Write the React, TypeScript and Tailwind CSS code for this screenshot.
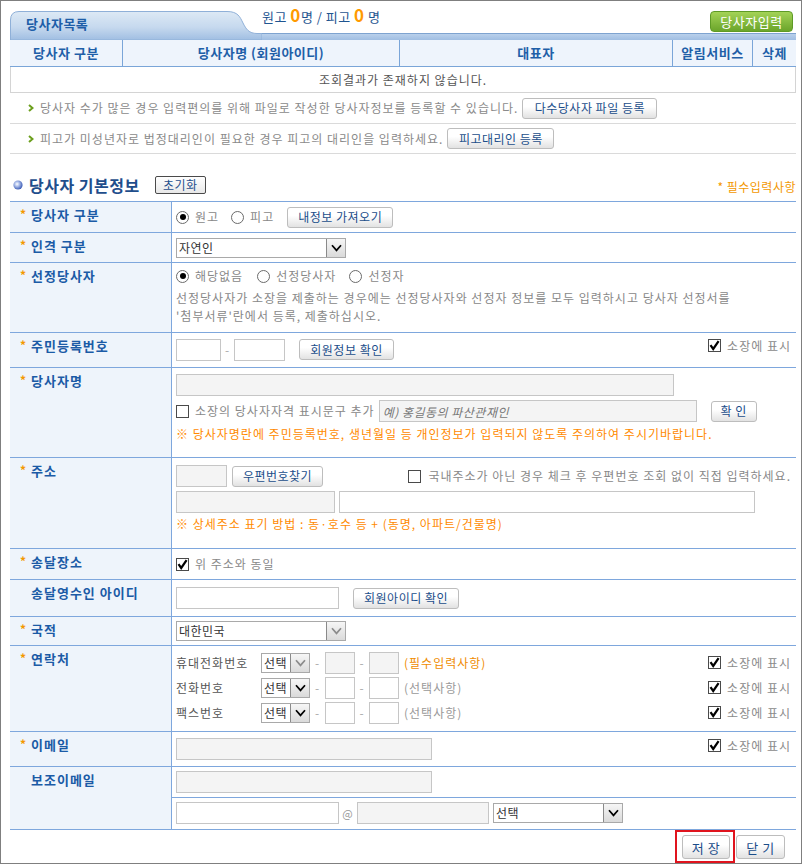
import React from "react";

function Check({ checked = false }: { checked?: boolean }) {
  return (
    <span className="inline-flex w-[13px] h-[13px] shrink-0 items-center justify-center border border-[#4a4a4a] bg-white">
      {checked && (
        <svg width="11" height="11" viewBox="0 0 11 11">
          <path d="M1.5 5.2 L4.2 9 L9.6 1.2" fill="none" stroke="#000" strokeWidth="2.2" />
        </svg>
      )}
    </span>
  );
}

function Radio({ checked = false }: { checked?: boolean }) {
  return (
    <span className="inline-flex w-[13px] h-[13px] shrink-0 items-center justify-center rounded-full border border-[#6b6b6b] bg-white">
      {checked && <span className="w-[6px] h-[6px] rounded-full bg-black" />}
    </span>
  );
}

function Btn({ children, className = "" }: { children: React.ReactNode; className?: string }) {
  return (
    <button
      type="button"
      className={`inline-flex shrink-0 items-center justify-center rounded-[3px] border border-[#bdbdbd] bg-linear-to-b from-white from-40% to-[#e2e2e2] text-[12px] leading-none tracking-[0.5px] whitespace-nowrap text-[#1b4e8a] ${className}`}
    >
      {children}
    </button>
  );
}

function Select({ value, className = "", disabled = false }: { value: string; className?: string; disabled?: boolean }) {
  return (
    <div className={`flex h-[20px] shrink-0 border border-[#a9a9a9] bg-white ${className}`}>
      <span className="flex-1 pl-[2px] text-[12px] leading-[18px] tracking-[0.5px] text-[#333] whitespace-nowrap overflow-hidden">{value}</span>
      <span className="flex w-[19px] items-center justify-center border-l border-[#8a8a8a] bg-linear-to-b from-[#f6f6f6] to-[#dadada]">
        <svg width="11" height="8" viewBox="0 0 11 8">
          <path d="M1 1.2 L5.5 6.4 L10 1.2" fill="none" stroke={disabled ? "#8c8c8c" : "#000"} strokeWidth="1.7" />
        </svg>
      </span>
    </div>
  );
}

function Field({ className = "", gray = false, placeholder }: { className?: string; gray?: boolean; placeholder?: string }) {
  return (
    <input
      readOnly
      placeholder={placeholder}
      className={`h-[22px] shrink-0 border border-[#c6c6c6] px-[3px] text-[12px] tracking-[0.5px] outline-none italic placeholder:text-[#777] ${gray ? "bg-[#f4f4f4]" : "bg-white"} ${className}`}
    />
  );
}

function ShowOnDoc() {
  return (
    <div className="ml-auto flex h-[13px] items-center gap-[6px]">
      <Check checked />
      <span className="text-[12px] leading-none text-[#8a8a8a] whitespace-nowrap">소장에 표시</span>
    </div>
  );
}

function Row({
  label,
  req = false,
  h,
  cell = "",
  children,
}: {
  label: string;
  req?: boolean;
  h: string;
  cell?: string;
  children: React.ReactNode;
}) {
  return (
    <div className={`flex border-b border-[#7ea7dd] ${h}`}>
      <div className="flex w-[162px] shrink-0 items-start border-r border-[#7ea7dd] bg-[#eef4fb] pl-[10px] pt-[4px]">
        <span className="w-[11px] text-[12px] font-bold leading-[16px] text-[#f39800]">{req ? "*" : ""}</span>
        <span className="text-[13px] font-bold leading-[18px] tracking-[1px] text-[#1b5ba6] whitespace-nowrap">{label}</span>
      </div>
      <div className={`flex-1 pl-[4px] pr-[5px] ${cell}`}>{children}</div>
    </div>
  );
}

function PhoneLine({ label, note, required = false }: { label: string; note: string; required?: boolean }) {
  return (
    <div className="flex h-[25px] items-center">
      <span className="w-[85px] text-[12px] text-[#555]">{label}</span>
      <Select className="w-[49px]" value="선택" disabled={required} />
      <span className="w-[15px] text-center text-[12px] text-[#aaa]">-</span>
      <Field className="w-[30px]" gray={required} />
      <span className="w-[14px] text-center text-[12px] text-[#aaa]">-</span>
      <Field className="w-[30px]" gray={required} />
      <span className={`ml-[5px] text-[12px] ${required ? "text-[#f08c00]" : "text-[#999]"}`}>{note}</span>
      <ShowOnDoc />
    </div>
  );
}

function Arrow() {
  return (
    <svg width="6" height="8" viewBox="0 0 6 8" className="mr-[6px] shrink-0">
      <path d="M1 1 L4.5 4 L1 7" fill="none" stroke="#6c9f1d" strokeWidth="2" />
    </svg>
  );
}

export default function App() {
  return (
    <div className="w-[802px] h-[864px] overflow-hidden border border-[#7f7f7f] bg-white pl-[9px] pr-[5px] pt-[10px] font-['Noto_Sans_CJK_KR','Noto_Sans',sans-serif] text-[12px] tracking-[1px] text-[#666]">
      {/* list tab + counters */}
      <div className="flex h-[29px] items-stretch">
        <div className="relative h-[29px] w-[252px] shrink-0">
          <svg className="absolute inset-0" width="252" height="29" viewBox="0 0 252 29">
            <defs>
              <linearGradient id="tabFill" x1="0" y1="0" x2="0" y2="1">
                <stop offset="0" stopColor="#dde9f5" />
                <stop offset="0.55" stopColor="#c6d9ee" />
                <stop offset="1" stopColor="#a0bee2" />
              </linearGradient>
            </defs>
            <path
              d="M0.5 29 L0.5 9 Q0.5 0.5 9 0.5 L217 0.5 C228 0.5 230 6 233 12 C236 18 239 22.5 247 22.5 L252 22.5 L252 29 Z"
              fill="url(#tabFill)"
              stroke="#8fb0d8"
              strokeWidth="1"
            />
          </svg>
          <span className="relative block pl-[16px] pt-[4px] text-[13px] font-bold leading-[18px] tracking-[0.5px] text-[#1e5ea8]">당사자목록</span>
        </div>
        <div className="flex flex-1 flex-col">
          <div className="flex h-[22px] items-start justify-between">
            <div className="-mt-[2px] flex items-baseline text-[13px] leading-[12px] tracking-[0.5px] text-[#1f5590]">
              <span>원고&nbsp;</span>
              <span className="text-[17px] font-bold text-[#ff9a00]">0</span>
              <span>명 / 피고&nbsp;</span>
              <span className="text-[17px] font-bold text-[#ff9a00]">0</span>
              <span>&nbsp;명</span>
            </div>
            <button
              type="button"
              className="mr-[3px] h-[21px] w-[83px] rounded-[4px] border border-[#5e9a26] bg-linear-to-b from-[#a3d356] to-[#6ba52a] text-[13px] leading-none tracking-[0.5px] text-white"
            >
              당사자입력
            </button>
          </div>
          <div className="h-[7px] border-t border-[#7ea3d0] bg-linear-to-b from-[#b9d0eb] to-[#a0bee2]" />
        </div>
      </div>

      {/* list header */}
      <div className="grid h-[27px] grid-cols-[113px_277px_273px_80px_1fr] border-b border-[#7aa5d8] bg-[#eef4fc] text-[13px] font-bold tracking-[0.5px] text-[#1f5fa8]">
        <div className="flex items-center justify-center border-r border-[#7aa5d8]">당사자 구분</div>
        <div className="flex items-center justify-center border-r border-[#7aa5d8]">당사자명 (회원아이디)</div>
        <div className="flex items-center justify-center border-r border-[#7aa5d8]">대표자</div>
        <div className="flex items-center justify-center border-r border-[#7aa5d8]">알림서비스</div>
        <div className="flex items-center justify-center">삭제</div>
      </div>
      <div className="flex h-[26px] items-center justify-center border-x border-b border-[#d4d4d4] text-[12px] text-[#555]">
        조회결과가 존재하지 않습니다.
      </div>

      {/* notices */}
      <div className="flex h-[31px] items-center border-b border-[#dadada] pl-[18px] text-[#8a8a8a]">
        <Arrow />
        <span>당사자 수가 많은 경우 입력편의를 위해 파일로 작성한 당사자정보를 등록할 수 있습니다.</span>
        <Btn className="ml-[4px] h-[21px] w-[135px]">다수당사자 파일 등록</Btn>
      </div>
      <div className="flex h-[30px] items-center border-b border-[#dadada] pl-[18px] text-[#8a8a8a]">
        <Arrow />
        <span>피고가 미성년자로 법정대리인이 필요한 경우 피고의 대리인을 입력하세요.</span>
        <Btn className="ml-[4px] h-[21px] w-[107px]">피고대리인 등록</Btn>
      </div>

      {/* section title */}
      <div className="mt-[21px] flex h-[20px] items-center pl-[3px]">
        <svg width="10" height="10" viewBox="0 0 10 10" className="shrink-0">
          <defs>
            <radialGradient id="dot" cx="0.4" cy="0.4" r="0.6">
              <stop offset="0" stopColor="#ffffff" />
              <stop offset="0.35" stopColor="#b9c9ef" />
              <stop offset="1" stopColor="#3f5fb8" />
            </radialGradient>
          </defs>
          <circle cx="5" cy="5" r="4.6" fill="url(#dot)" />
        </svg>
        <span className="ml-[6px] text-[16px] font-bold leading-[20px] tracking-[0.5px] text-[#1f4e8c]">당사자 기본정보</span>
        <button
          type="button"
          className="ml-[15px] h-[18px] w-[51px] rounded-[2px] border border-[#4a4a4a] bg-linear-to-b from-white to-[#e8e8e8] text-[12px] leading-none tracking-[0.5px] text-[#1f4e8c]"
        >
          초기화
        </button>
        <span className="ml-auto pt-[4px] text-[12px] tracking-[0.5px] text-[#f39800]">* 필수입력사항</span>
      </div>

      {/* form */}
      <div className="mt-[6px] border-t border-[#7ea7dd]">
        <Row label="당사자 구분" req h="h-[31px]" cell="flex items-center text-[#888]">
          <Radio checked />
          <span className="ml-[6px]">원고</span>
          <span className="ml-[12px]" />
          <Radio />
          <span className="ml-[6px]">피고</span>
          <Btn className="ml-[13px] h-[21px] w-[106px]">내정보 가져오기</Btn>
        </Row>

        <Row label="인격 구분" req h="h-[30px]" cell="flex items-center">
          <Select className="w-[170px]" value="자연인" />
        </Row>

        <Row label="선정당사자" req h="h-[70px]" cell="pt-[4px] text-[#888]">
          <div className="flex h-[18px] items-center">
            <Radio checked />
            <span className="ml-[6px]">해당없음</span>
            <span className="ml-[14px]" />
            <Radio />
            <span className="ml-[6px]">선정당사자</span>
            <span className="ml-[13px]" />
            <Radio />
            <span className="ml-[6px]">선정자</span>
          </div>
          <div className="mt-[4px] leading-[18px]">
            선정당사자가 소장을 제출하는 경우에는 선정당사자와 선정자 정보를 모두 입력하시고 당사자 선정서를
            <br />
            '첨부서류'란에서 등록, 제출하십시오.
          </div>
        </Row>

        <Row label="주민등록번호" req h="h-[35px]" cell="flex items-start pt-[6px]">
          <Field className="w-[45px]" />
          <span className="w-[13px] text-center leading-[22px] text-[#aaa]">-</span>
          <Field className="w-[51px]" />
          <Btn className="ml-[14px] h-[21px] w-[95px]">회원정보 확인</Btn>
          <ShowOnDoc />
        </Row>

        <Row label="당사자명" req h="h-[90px]" cell="pt-[6px]">
          <Field className="block w-[498px]" gray />
          <div className="mt-[4px] flex h-[22px] items-center">
            <Check />
            <span className="ml-[6px] text-[#888]">소장의 당사자자격 표시문구 추가</span>
            <Field className="ml-[4px] w-[318px]" gray placeholder="예) 홍길동의 파산관재인" />
            <Btn className="ml-[14px] h-[21px] w-[46px]">확 인</Btn>
          </div>
          <div className="mt-[3px] leading-[18px] text-[#ff8a00]">
            ※ 당사자명란에 주민등록번호, 생년월일 등 개인정보가 입력되지 않도록 주의하여 주시기바랍니다.
          </div>
        </Row>

        <Row label="주소" req h="h-[91px]" cell="pt-[7px]">
          <div className="flex h-[22px] items-center">
            <Field className="w-[51px]" gray />
            <Btn className="ml-[5px] h-[21px] w-[91px]">우편번호찾기</Btn>
            <div className="ml-auto flex items-center gap-[7px]">
              <Check />
              <span className="text-[#888]">국내주소가 아닌 경우 체크 후 우편번호 조회 없이 직접 입력하세요.</span>
            </div>
          </div>
          <div className="mt-[4px] flex h-[22px] items-center">
            <Field className="w-[159px]" gray />
            <Field className="ml-[4px] w-[416px]" />
          </div>
          <div className="mt-[2px] leading-[18px] text-[#ff8a00]">※ 상세주소 표기 방법 : 동·호수 등 + (동명, 아파트/건물명)</div>
        </Row>

        <Row label="송달장소" req h="h-[31px]" cell="flex items-center">
          <Check checked />
          <span className="ml-[6px] text-[#888]">위 주소와 동일</span>
        </Row>

        <Row label="송달영수인 아이디" h="h-[37px]" cell="flex items-center">
          <Field className="w-[163px]" />
          <Btn className="ml-[14px] h-[21px] w-[106px]">회원아이디 확인</Btn>
        </Row>

        <Row label="국적" req h="h-[29px]" cell="flex items-center">
          <Select className="w-[170px]" value="대한민국" disabled />
        </Row>

        <Row label="연락처" req h="h-[86px]" cell="pt-[4px]">
          <PhoneLine label="휴대전화번호" note="(필수입력사항)" required />
          <PhoneLine label="전화번호" note="(선택사항)" />
          <PhoneLine label="팩스번호" note="(선택사항)" />
        </Row>

        <Row label="이메일" req h="h-[35px]" cell="flex items-start pt-[6px]">
          <Field className="w-[256px]" gray />
          <div className="ml-auto pt-[1px]">
            <ShowOnDoc />
          </div>
        </Row>

        <Row label="보조이메일" h="h-[63px]" cell="!pl-0 !pr-0">
          <div className="flex h-[31px] items-start border-b border-[#7ea7dd] pl-[4px] pt-[4px]">
            <Field className="w-[256px]" gray />
          </div>
          <div className="flex items-center pl-[4px] pt-[4px]">
            <Field className="w-[163px]" />
            <span className="w-[18px] text-center text-[11px] text-[#999]">@</span>
            <Field className="w-[132px]" gray />
            <Select className="ml-[4px] w-[130px]" value="선택" />
          </div>
        </Row>
      </div>

      {/* actions */}
      <div className="flex justify-end pr-[11px]">
        <div className="h-[33px] border-2 border-[#e0141e] pl-[5px] pr-[3px] pt-[3px]">
          <Btn className="h-[24px] w-[48px] text-[13px]">저 장</Btn>
        </div>
        <Btn className="ml-[1px] mt-[5px] h-[24px] w-[49px] text-[13px]">닫 기</Btn>
      </div>
    </div>
  );
}
